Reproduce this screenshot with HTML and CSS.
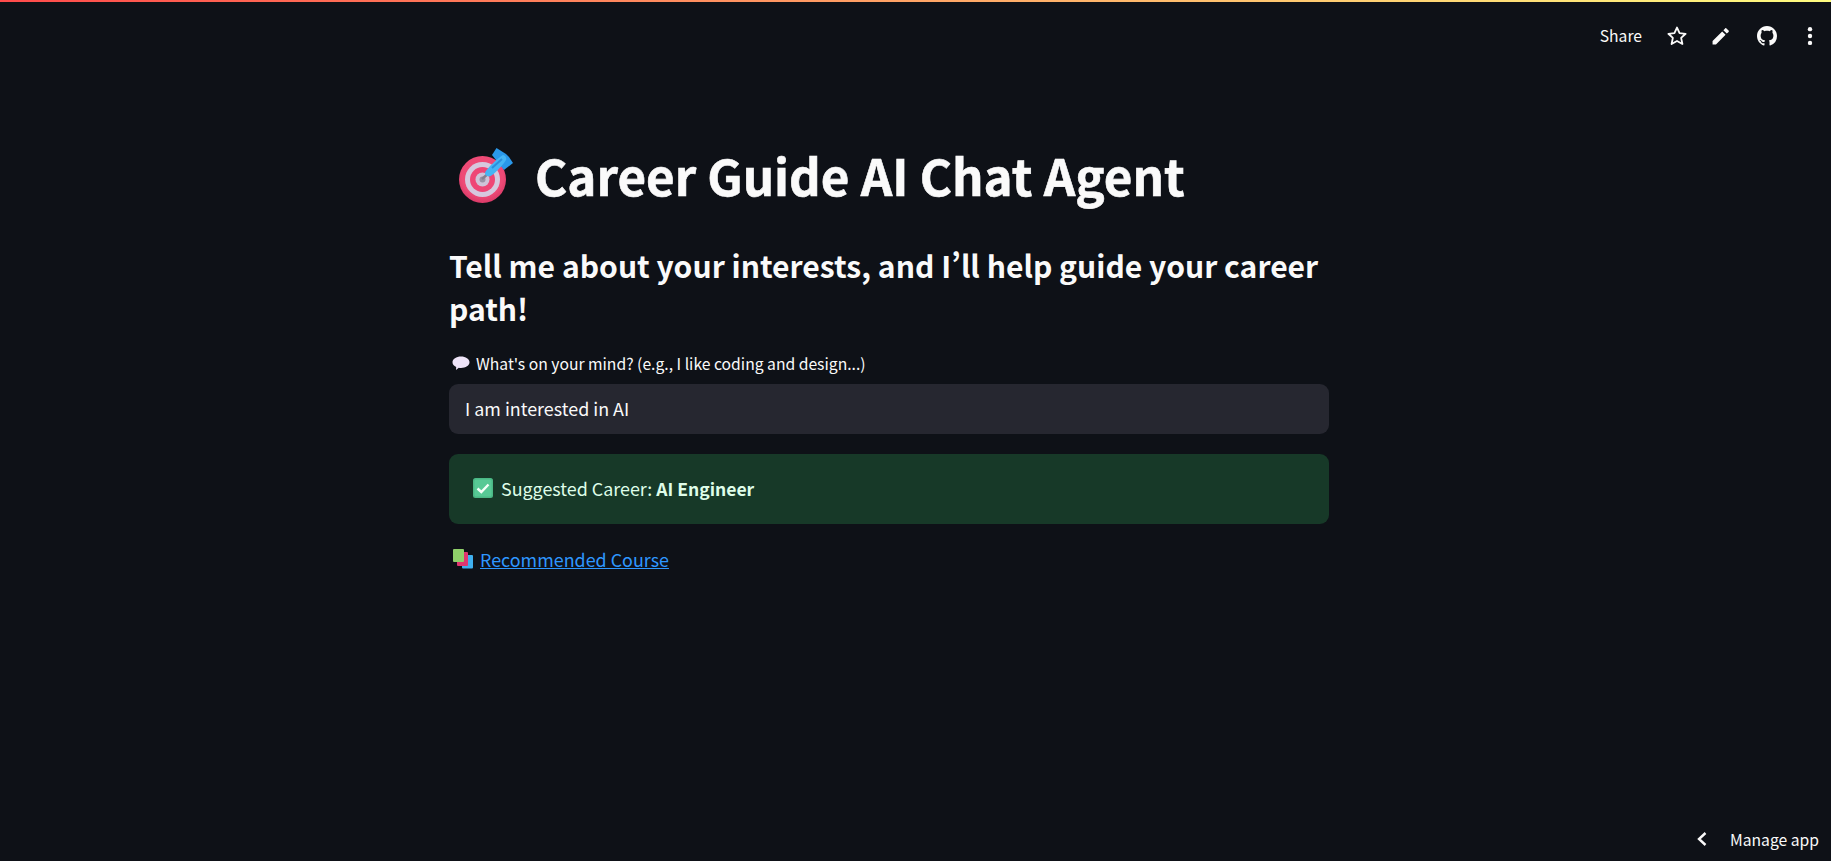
FILE: index.html
```html
<!DOCTYPE html>
<html lang="en">
<head>
<meta charset="utf-8">
<title>Career Guide AI Chat Agent</title>
<link rel="stylesheet" href="styles.css">
</head>
<body>
<div class="decoration"></div>
<header class="toolbar">
  <span class="share">Share</span>
  <svg class="tool" viewBox="0 0 24 24"><path d="M12 2.800l2.800 6.100 6.600.7-4.900 4.500 1.400 6.600L12 17.400l-5.900 3.300 1.400-6.600-4.900-4.500 6.600-.7z" fill="none" stroke="#fafafa" stroke-width="2" stroke-linejoin="round"/></svg>
  <svg class="tool" viewBox="0 0 24 24"><path d="M2.800 17.500v3.700h3.700l10.500-10.500-3.700-3.700zM20.300 7.500c.4-.4.4-1 0-1.400l-2.400-2.400c-.4-.4-1-.4-1.400 0l-1.900 1.900 3.700 3.700z" fill="#fafafa"/></svg>
  <svg class="tool tool-gh" viewBox="0 0 16 16"><path fill="#fafafa" d="M8 0C3.580 0 0 3.580 0 8c0 3.540 2.290 6.530 5.470 7.590.4.070.55-.17.55-.38 0-.19-.01-.82-.01-1.490-2.010.37-2.530-.49-2.690-.94-.09-.23-.48-.94-.82-1.130-.28-.15-.68-.52-.01-.53.63-.01 1.080.58 1.230.82.720 1.210 1.870.87 2.330.66.070-.52.28-.87.51-1.070-1.780-.2-3.640-.89-3.640-3.950 0-.87.31-1.590.82-2.150-.08-.2-.36-1.020.08-2.120 0 0 .67-.21 2.200.82.640-.18 1.320-.27 2-.27s1.360.09 2 .27c1.530-1.040 2.200-.82 2.200-.82.44 1.100.16 1.920.08 2.120.51.56.82 1.270.82 2.150 0 3.070-1.870 3.750-3.650 3.950.29.25.54.73.54 1.480 0 1.070-.01 1.930-.01 2.200 0 .21.15.46.55.38A8.010 8.010 0 0 0 16 8c0-4.420-3.580-8-8-8z"/></svg>
  <svg class="tool" viewBox="0 0 24 24"><g fill="#fafafa"><circle cx="12" cy="4.500" r="2.400"/><circle cx="12" cy="12" r="2.400"/><circle cx="12" cy="19.500" r="2.400"/></g></svg>
</header>
<main class="content">
  <h1 class="title">
    <svg class="title-emoji" viewBox="0 0 54 55">
      <defs>
        <radialGradient id="rim" cx="50%" cy="42%" r="58%"><stop offset="0.75" stop-color="#ee4a76"/><stop offset="1" stop-color="#d93a68"/></radialGradient>
      </defs>
      <circle cx="23.500" cy="31.500" r="23.500" fill="url(#rim)"/>
      <circle cx="23.500" cy="31.500" r="17.500" fill="#d6c8de"/>
      <circle cx="23.500" cy="31.500" r="12.500" fill="#ee4676"/>
      <circle cx="23.500" cy="31.500" r="7" fill="#cfc3d8"/>
      <circle cx="23.500" cy="31.500" r="3" fill="#9a93a6"/>
      <path d="M23 31l8-7" stroke="#85808f" stroke-width="2.500"/>
      <path d="M33 7L37.500 0 47 6l3 3 4 6-9 7z" fill="#2a98ea"/>
      <path d="M26 25c0-3 14-16 18-18 2 0 4 3 3 5-2 4-14 17-17 16.500-3-.5-4-1.500-4-3.500z" fill="#45b5f5"/>
      <path d="M33 20l10-9" stroke="#2b8fdc" stroke-width="2"/>
    </svg>
    <span>Career Guide AI Chat Agent</span>
  </h1>
  <h2 class="subtitle">Tell me about your interests, and I’ll help guide your career path!</h2>
  <label class="label" for="q">
    <svg class="label-emoji" viewBox="0 0 18 15"><path d="M9 .500c4.700 0 8.500 2.500 8.500 5.800S13.700 12 9 12c-.8 0-1.500-.1-2.200-.2L4 14l.2-3C1.800 10 .500 8.400.500 6.300.500 3 4.300.500 9 .500z" fill="#eee4f8"/></svg>
    <span>What's on your mind? (e.g., I like coding and design...)</span>
  </label>
  <input class="field" id="q" type="text" value="I am interested in AI">
  <div class="success">
    <svg class="check" viewBox="0 0 20 20"><rect width="20" height="20" rx="2.500" fill="#4bb885"/><rect x="1.500" y="1.500" width="17" height="17" rx="1.500" fill="#57c995"/><path d="M4.500 10.500l3.800 3.500 7.200-7.500" fill="none" stroke="#f4fff8" stroke-width="2.400"/></svg>
    <span>Suggested Career: <strong>AI Engineer</strong></span>
  </div>
  <p class="course">
    <svg class="books" viewBox="0 0 20 20"><rect x="9" y="6" width="11" height="13.500" rx="1" fill="#3fb0ef"/><rect x="4" y="3" width="11" height="14" rx="1" fill="#e0366f"/><rect x="0" y="0" width="11" height="13" rx="1" fill="#8fd06a"/></svg>
    <a href="#">Recommended Course</a>
  </p>
</main>
<footer class="manage">
  <svg class="chevron" viewBox="0 0 12 16"><path d="M9.500 2L3 8l6.500 6" fill="none" stroke="#fafafa" stroke-width="2.400"/></svg>
  <span>Manage app</span>
</footer>
</body>
</html>
```
FILE: styles.css
```css
* { box-sizing: border-box; }
html, body { height: 100%; }
body {
  margin: 0;
  height: 100vh;
  overflow: hidden;
  display: flex;
  flex-direction: column;
  background: #0e1117;
  color: #fafafa;
  font-family: "Noto Sans CJK SC", "Noto Sans", sans-serif;
  font-variant-east-asian: proportional-width;
}
.decoration {
  height: 2px;
  flex: none;
  background: linear-gradient(90deg, #ff4b4b, #fffd80);
}
.toolbar {
  flex: none;
  height: 68px;
  padding: 0 10px 0 0;
  display: flex;
  align-items: center;
  justify-content: flex-end;
  font-size: 16px;
}
.share { margin-right: 24px; font-size: 15.700px; line-height: 24px; }
.tool { width: 22px; height: 22px; margin-left: 22px; flex: none; }
.share + .tool { margin-left: 0; }
.tool-gh { width: 20px; height: 20px; margin-left: 25px; }
.content {
  flex: 1;
  width: 880px;
  margin-left: 449px;
  padding-top: 68px;
}
.title {
  margin: 0;
  height: 74px;
  display: flex;
  align-items: center;
  font-size: 49.300px;
  line-height: 74px;
  font-weight: 700;
  -webkit-text-stroke: 0.6px #fafafa;
}
.title-emoji { width: 54px; height: 55px; margin-left: 10px; margin-right: 22px; flex: none; }
.subtitle {
  margin: 32px 0 0;
  font-size: 30.100px;
  line-height: 43px;
  font-weight: 700;
}
.label {
  margin-top: 21px;
  height: 24px;
  display: flex;
  align-items: center;
  font-size: 15.700px;
}
.label-emoji { width: 18px; height: 15px; margin-left: 3px; margin-right: 6px; flex: none; }
.field {
  display: block;
  margin-top: 9px;
  width: 100%;
  height: 50px;
  padding: 0 16px 3px;
  border: 0;
  border-radius: 9px;
  background: #262730;
  color: #fafafa;
  font: inherit;
  font-size: 17.900px;
  outline: none;
}
.success {
  margin-top: 20px;
  height: 70px;
  padding: 0 24px 3px;
  display: flex;
  align-items: center;
  border-radius: 9px;
  background: #173928;
  color: #dffde9;
  font-size: 17.900px;
}
.check { width: 20px; height: 20px; margin-right: 8px; flex: none; }
.success strong { font-weight: 700; font-size: 17.500px; }
.course {
  margin: 21px 0 0;
  display: flex;
  align-items: center;
  height: 28px;
  font-size: 17.900px;
}
.books { width: 20px; height: 20px; margin-left: 4px; margin-right: 7px; flex: none; }
.course a { color: #2e97ff; text-decoration: underline; }
.manage {
  flex: none;
  height: 42px;
  padding: 0 12px 2px 0;
  display: flex;
  align-items: center;
  justify-content: flex-end;
  font-size: 15.700px;
}
.chevron { width: 12px; height: 16px; margin-right: 22px; flex: none; }
```
